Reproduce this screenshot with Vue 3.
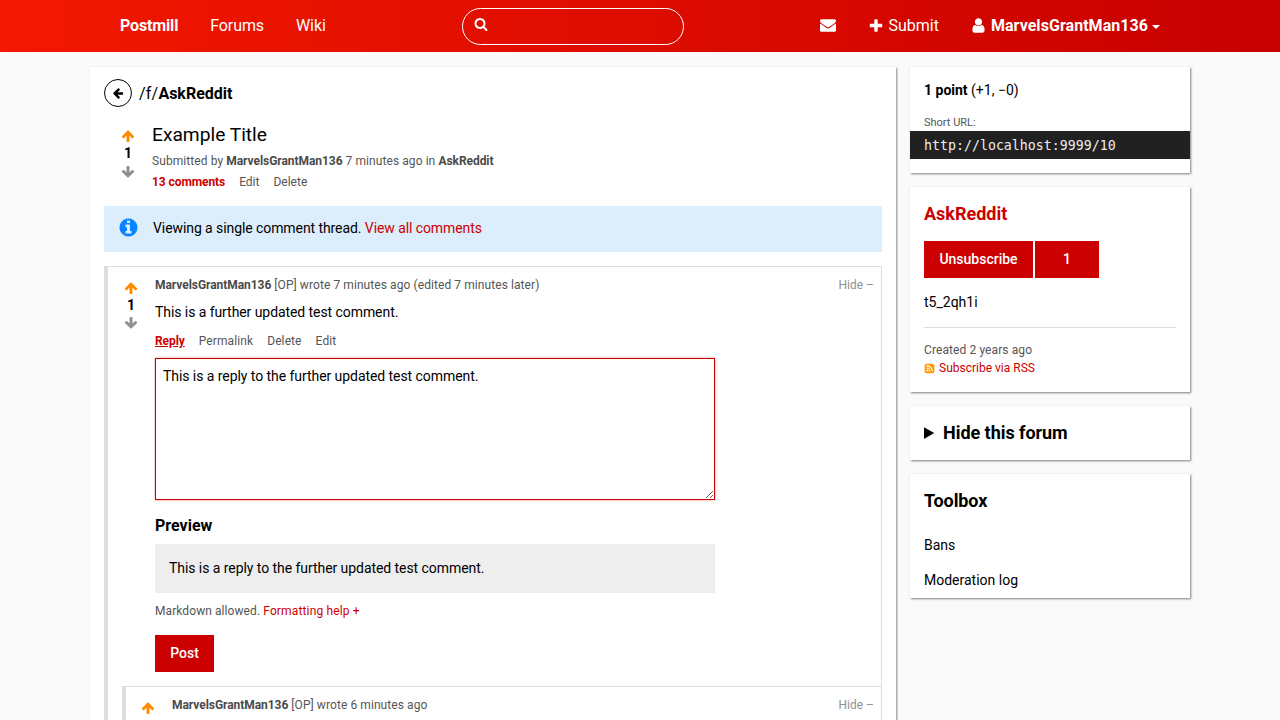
<script setup>
const icons = {
  search: 'M1216 832q0-185-131.5-316.5t-316.5-131.5-316.5 131.5-131.5 316.5 131.5 316.5 316.5 131.5 316.5-131.5 131.5-316.5zm512 832q0 52-38 90t-90 38q-54 0-90-38l-343-342q-179 124-399 124-143 0-273.5-55.5t-225-150-150-225-55.5-273.5 55.5-273.5 150-225 225-150 273.5-55.5 273.5 55.5 225 150 150 225 55.5 273.5q0 220-124 399l343 343q37 37 37 90z',
  envelope: 'M1792 710v794q0 66-47 113t-113 47h-1472q-66 0-113-47t-47-113v-794q44 49 101 87 362 246 497 345 57 42 92.5 65.5t94.5 48 110 24.5h2q51 0 110-24.5t94.5-48 92.5-65.5q170-123 498-345 57-39 100-87zm0-294q0 79-49 151t-122 123q-376 261-468 325-10 7-42.5 30.5t-54 38-52 32.5-57.5 27-50 9h-2q-23 0-50-9t-57.5-27-52-32.5-54-38-42.5-30.5q-91-64-262-182.5t-205-142.5q-62-42-117-115.5t-55-136.5q0-78 41.5-130t118.5-52h1472q65 0 112.5 47t47.5 113z',
  plus: 'M1600 736v192q0 40-28 68t-68 28h-416v416q0 40-28 68t-68 28h-192q-40 0-68-28t-28-68v-416h-416q-40 0-68-28t-28-68v-192q0-40 28-68t68-28h416v-416q0-40 28-68t68-28h192q40 0 68 28t28 68v416h416q40 0 68 28t28 68z',
  user: 'M1536 1399q0 109-62.5 187t-150.5 78h-854q-88 0-150.5-78t-62.5-187q0-85 8.5-160.5t31.5-152 58.5-131 94-89 134.5-34.5q131 128 313 128t313-128q76 0 134.5 34.5t94 89 58.5 131 31.5 152 8.5 160.5zm-256-887q0 159-112.5 271.5t-271.5 112.5-271.5-112.5-112.5-271.5 112.5-271.5 271.5-112.5 271.5 112.5 112.5 271.5z',
  up: 'M1675 971q0 51-37 90l-75 75q-38 38-91 38-54 0-90-38l-294-293v704q0 52-37.5 84.5t-90.5 32.5h-128q-53 0-90.5-32.5t-37.5-84.5v-704l-294 293q-36 38-90 38t-90-38l-75-75q-38-38-38-90 0-53 38-91l651-651q35-37 90-37 54 0 91 37l651 651q37 39 37 91z',
  down: 'M1675 832q0 53-37 90l-651 652q-39 37-91 37-53 0-90-37l-651-652q-38-36-38-90 0-53 38-91l74-75q39-37 91-37 53 0 90 37l294 294v-704q0-52 38-90t90-38h128q52 0 90 38t38 90v704l294-294q37-37 90-37 52 0 91 37l75 75q37 39 37 91z',
  left: 'M1664 896v128q0 53-32.5 90.5t-84.5 37.5h-704l293 294q38 36 38 90t-38 90l-75 76q-37 37-90 37-52 0-91-37l-651-652q-37-37-37-90 0-52 37-91l651-650q38-38 91-38 52 0 90 38l75 74q38 38 38 91t-38 91l-293 293h704q52 0 84.5 37.5t32.5 90.5z',
  info: 'M1152 1376v-160q0-14-9-23t-23-9h-96v-512q0-14-9-23t-23-9h-320q-14 0-23 9t-9 23v160q0 14 9 23t23 9h96v320h-96q-14 0-23 9t-9 23v160q0 14 9 23t23 9h448q14 0 23-9t9-23zm-128-896v-160q0-14-9-23t-23-9h-192q-14 0-23 9t-9 23v160q0 14 9 23t23 9h192q14 0 23-9t9-23zm640 416q0 209-103 385.5t-279.5 279.5-385.5 103-385.5-103-279.5-279.5-103-385.5 103-385.5 279.5-279.5 385.5-103 385.5 103 279.5 279.5 103 385.5z'
}
const replyText = 'This is a reply to the further updated test comment.'
</script>

<template>
  <div class="page">
    <header class="bar">
      <nav class="nav">
        <div class="nav-left">
          <a class="nav-link brand">Postmill</a>
          <a class="nav-link forums">Forums</a>
          <a class="nav-link wiki">Wiki</a>
        </div>
        <div class="search">
          <svg class="search-icon" viewBox="0 0 1792 1792"><path :d="icons.search" /></svg>
        </div>
        <div class="nav-right">
          <a class="nav-link"><svg class="nav-icon mail" viewBox="0 0 1792 1792"><path :d="icons.envelope" /></svg></a>
          <a class="nav-link"><svg class="nav-icon plus" viewBox="0 0 1792 1792"><path :d="icons.plus" /></svg>Submit</a>
          <a class="nav-link user"><svg class="nav-icon usr" viewBox="0 0 1792 1792"><path :d="icons.user" /></svg>MarvelsGrantMan136<span class="caret"></span></a>
        </div>
      </nav>
    </header>

    <div class="content">
      <main class="main">
        <div class="crumb">
          <span class="back"><svg viewBox="0 0 1792 1792"><path :d="icons.left" /></svg></span>
          <span class="crumb-text"><span class="crumb-prefix">/f/</span><b>AskReddit</b></span>
        </div>

        <article class="submission">
          <div class="vote sub-vote">
            <svg class="arrow on" viewBox="0 0 1792 1792"><path :d="icons.up" /></svg>
            <b class="score">1</b>
            <svg class="arrow" viewBox="0 0 1792 1792"><path :d="icons.down" /></svg>
          </div>
          <div class="sub-body">
            <h1 class="title">Example Title</h1>
            <p class="meta">Submitted by <b>MarvelsGrantMan136</b> 7 minutes ago in <b>AskReddit</b></p>
            <p class="links"><a class="red"><b>13 comments</b></a><a>Edit</a><a>Delete</a></p>
          </div>
        </article>

        <div class="alert">
          <svg class="alert-icon" viewBox="0 0 1792 1792"><path :d="icons.info" /></svg>
          <span>Viewing a single comment thread. <a class="red">View all comments</a></span>
        </div>

        <section class="comment">
          <div class="comment-row">
            <div class="vote">
              <svg class="arrow on" viewBox="0 0 1792 1792"><path :d="icons.up" /></svg>
              <b class="score">1</b>
              <svg class="arrow" viewBox="0 0 1792 1792"><path :d="icons.down" /></svg>
            </div>
            <div class="comment-body">
              <div class="comment-head">
                <span class="meta"><b>MarvelsGrantMan136</b> [OP] wrote 7 minutes ago (edited 7 minutes later)</span>
                <span class="hide">Hide –</span>
              </div>
              <p class="comment-text">This is a further updated test comment.</p>
              <p class="links comment-links"><a class="red reply"><b>Reply</b></a><a>Permalink</a><a>Delete</a><a>Edit</a></p>
              <textarea class="reply-box" :value="replyText"></textarea>
              <h3 class="preview-title">Preview</h3>
              <div class="preview">{{ replyText }}</div>
              <p class="meta markdown">Markdown allowed. <a class="red help">Formatting help +</a></p>
              <button class="btn post">Post</button>
            </div>
          </div>

          <section class="comment nested">
            <div class="comment-row">
              <div class="vote">
                <svg class="arrow on" viewBox="0 0 1792 1792"><path :d="icons.up" /></svg>
              </div>
              <div class="comment-body">
                <div class="comment-head">
                  <span class="meta"><b>MarvelsGrantMan136</b> [OP] wrote 6 minutes ago</span>
                  <span class="hide">Hide –</span>
                </div>
              </div>
            </div>
          </section>
        </section>
      </main>

      <aside class="side">
        <section class="card card-url">
          <p class="points"><b>1 point</b> (+1, −0)</p>
          <p class="short-label">Short URL:</p>
          <code class="short-url">http://localhost:9999/10</code>
        </section>

        <section class="card card-forum">
          <h2 class="forum-name">AskReddit</h2>
          <div class="sub-buttons">
            <button class="btn unsub">Unsubscribe</button>
            <button class="btn count">1</button>
          </div>
          <p class="forum-desc">t5_2qh1i</p>
          <hr class="rule" />
          <p class="created">Created 2 years ago</p>
          <p class="rss">
            <svg class="rss-icon" viewBox="0 0 16 16">
              <rect x="1" y="1" width="14" height="14" rx="2.5" fill="#f90" />
              <circle cx="5" cy="11" r="1.5" fill="#fff" />
              <path d="M3.5 7.2a5.3 5.3 0 0 1 5.3 5.3M3.5 3.8a8.7 8.7 0 0 1 8.7 8.7" fill="none" stroke="#fff" stroke-width="1.5" />
            </svg>
            <a class="red">Subscribe via RSS</a>
          </p>
        </section>

        <details class="card card-hide">
          <summary>Hide this forum</summary>
        </details>

        <section class="card card-tools">
          <h2 class="tools-title">Toolbox</h2>
          <p class="tool">Bans</p>
          <p class="tool">Moderation log</p>
        </section>
      </aside>
    </div>
  </div>
</template>

<style>
html, body { margin: 0; height: 720px; overflow: hidden; background: #fafafa; }
</style>

<style scoped>
* { box-sizing: border-box; }
p, h1, h2, h3 { margin: 0; }
.page { height: 720px; overflow: hidden; font-family: Roboto, "Liberation Sans", sans-serif; font-size: 14px; line-height: 21px; color: #000; background: #fafafa; }
.bar { height: 52px; background: linear-gradient(to right, #f31800, #c70000); color: #fff; }
.nav { width: 1100px; height: 52px; margin: 0 auto; padding: 0 14px; display: flex; align-items: center; }
.nav-left { display: flex; width: 358px; }
.nav-link { display: flex; align-items: center; padding: 0 16px; font-size: 16px; line-height: 52px; height: 52px; color: #fff; white-space: nowrap; }
.brand { font-weight: 700; letter-spacing: -0.15px; }
.forums { letter-spacing: -0.1px; }
.wiki { letter-spacing: -0.1px; }
.search { width: 222px; height: 37px; border: 1px solid #fff; border-radius: 19px; padding: 8px 11px; flex: none; }
.search-icon { display: block; width: 14px; height: 14px; fill: #fff; }
.nav-right { display: flex; margin-left: auto; }
.nav-icon { width: 16px; height: 16px; fill: #fff; flex: none; }
.mail { margin: -2px 1px 0 0; }
.plus { margin: 0 4px 0 -1px; }
.usr { width: 17px; height: 17px; margin: -1px 4px 0 -1px; }
.user { font-weight: 700; letter-spacing: 0.05px; }
.caret { display: inline-block; margin-left: 4px; margin-top: 2px; border-top: 4px solid #fff; border-left: 4px solid transparent; border-right: 4px solid transparent; }

.content { width: 1100px; margin: 15px auto 0; display: flex; align-items: flex-start; gap: 14px; }
.main { width: 806px; height: 660px; flex: none; background: #fff; padding: 12px 14px 0; box-shadow: 1px 1px 2px rgba(0,0,0,.45); }
.crumb { display: flex; align-items: center; height: 28px; }
.back { width: 28px; height: 28px; border: 1px solid #000; border-radius: 50%; display: flex; align-items: center; justify-content: center; margin-right: 7px; }
.back svg { width: 12px; height: 12px; fill: #000; }
.crumb-text { font-size: 16px; }
.crumb-prefix { letter-spacing: 0.2px; }

.submission { display: flex; margin-top: 14px; padding-left: 16px; }
.vote { width: 16px; flex: none; display: flex; flex-direction: column; align-items: center; }
.sub-vote { padding-top: 8px; }
.arrow { width: 14px; height: 14px; fill: #909090; flex: none; }
.arrow.on { fill: #ff8c00; }
.score { line-height: 20px; height: 20px; }
.score + .arrow { margin-top: 1px; }
.sub-vote .score + .arrow { margin-top: 2px; }
.sub-body { margin-left: 16px; }
.title { font-size: 19.2px; font-weight: 400; line-height: 27px; }
.meta { font-size: 12px; color: #555; line-height: 18px; letter-spacing: 0.08px; }
.meta b { color: #4a4a4a; letter-spacing: -0.05px; }
.links { font-size: 12px; line-height: 18px; color: #555; display: flex; gap: 14px; margin-top: 3px; }
.links b { letter-spacing: -0.08px; }
.submission .meta { margin-top: 4px; }
.red { color: #c00; }

.alert { height: 46px; margin-top: 15px; background: #dcedfc; display: flex; align-items: center; padding: 0 14px 2px; gap: 14px; letter-spacing: -0.08px; }
.alert-icon { width: 21px; height: 21px; fill: #0a84ff; margin-top: -2px; flex: none; }

.comment { margin-top: 14px; border: 1px solid #ddd; border-left-width: 4px; }
.comment-row { display: flex; padding: 9px 7px 0 15px; }
.comment-row > .vote { padding-top: 5px; margin-right: 16px; }
.comment-body { flex: 1; min-width: 0; }
.comment-head { display: flex; justify-content: space-between; }
.hide { font-size: 12px; line-height: 18px; color: #909090; }
.comment-text { margin-top: 8px; letter-spacing: -0.07px; }
.comment-links { margin-top: 9px; letter-spacing: 0.1px; }
.reply { text-decoration: underline; }
.reply-box { display: block; width: 560px; height: 142px; margin-top: 8px; padding: 7px; border: 1px solid #c00; border-radius: 0; outline: 0; font: inherit; letter-spacing: -0.06px; color: #000; background: #fff; box-shadow: 0 0 2px rgba(204,0,0,.5); resize: both; }
.preview-title { font-size: 16px; font-weight: 700; line-height: 24px; margin-top: 14px; }
.preview { width: 560px; height: 49px; margin-top: 6px; padding: 14px; background: #eee; letter-spacing: -0.06px; }
.markdown { margin-top: 9px; }
.help { letter-spacing: 0.15px; }
.btn { border: 0; border-radius: 0; background: #c00; color: #fff; font: 500 14px/21px Roboto, sans-serif; }
.post { display: block; width: 59px; height: 37px; margin-top: 15px; padding: 0; }
.nested { margin: 14px 0 0 14px; border-right: 0; border-bottom: 0; min-height: 80px; }
.nested .comment-row { padding-left: 14px; }

.side { width: 280px; flex: none; display: flex; flex-direction: column; gap: 14px; }
.card { background: #fff; box-shadow: 1px 1px 2px rgba(0,0,0,.5); padding: 0 14px; }
.card-url { height: 106px; padding-top: 13px; }
.short-label { font-size: 11px; line-height: 16px; color: #555; margin-top: 14px; }
.short-url { display: block; margin: 0 -14px; padding: 1px 14px 0; height: 28px; background: #212121; color: #eee; font: 13.28px/28px "DejaVu Sans Mono", monospace; }
.card-forum { height: 205px; padding-top: 13px; }
.forum-name { font-size: 18px; line-height: 27px; font-weight: 700; color: #c00; }
.sub-buttons { display: flex; gap: 2px; margin-top: 14px; }
.unsub { width: 109px; height: 37px; padding: 0; }
.count { width: 64px; height: 37px; padding: 0; }
.forum-desc { margin-top: 14px; }
.rule { border: 0; border-top: 1px solid #ddd; margin: 14px 0 0; }
.created { font-size: 12px; line-height: 18px; color: #555; margin-top: 13px; letter-spacing: 0.1px; }
.rss { font-size: 12px; line-height: 18px; display: flex; align-items: center; gap: 4px; }
.rss-icon { width: 11px; height: 11px; }
.card-hide { height: 54px; padding-top: 13px; }
.card-hide summary { font-size: 18px; line-height: 27px; font-weight: 700; cursor: pointer; letter-spacing: -0.05px; }
.card-tools { height: 124px; padding-top: 13px; }
.tools-title { font-size: 18px; line-height: 27px; font-weight: 700; letter-spacing: -0.1px; }
.tool { line-height: 21px; margin-top: 14px; }
.tools-title + .tool { margin-top: 21px; }
</style>
